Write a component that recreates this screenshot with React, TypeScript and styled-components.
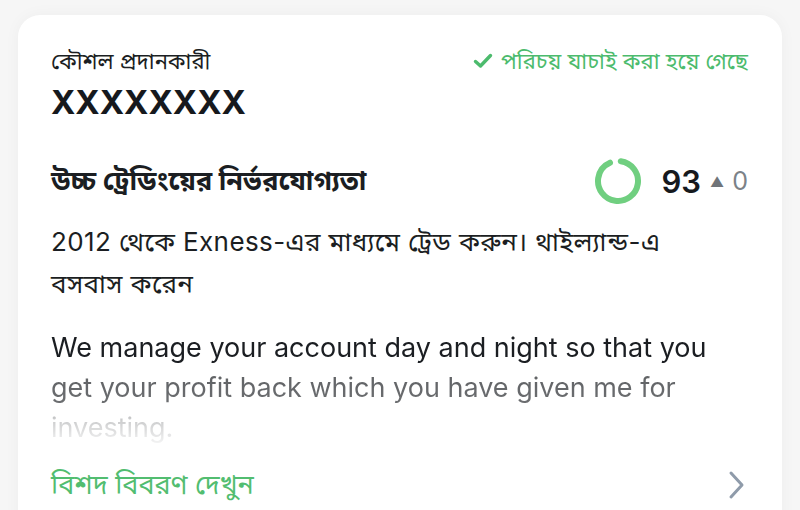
import React from 'react';
import styled, { createGlobalStyle } from 'styled-components';

const GlobalStyle = createGlobalStyle`
  html, body {
    margin: 0;
    padding: 0;
    background: #f6f6f6;
  }
  body {
    font-family: Inter, "Noto Sans", "Noto Sans Bengali", sans-serif;
    color: #1b1e22;
    -webkit-font-smoothing: antialiased;
  }
`;

const Page = styled.div`
  width: 800px;
  height: 510px;
  overflow: hidden;
  padding: 15px 18px 0 18px;
  box-sizing: border-box;
`;

const Card = styled.div`
  background: #ffffff;
  border-radius: 22px;
  box-shadow: 0 0 16px rgba(0, 0, 0, 0.04);
  padding: 30px 34px 40px 33px;
  display: flex;
  flex-direction: column;
  height: 600px;
  box-sizing: border-box;
`;

const HeaderRow = styled.div`
  display: flex;
  justify-content: space-between;
  align-items: flex-start;
`;

const Provider = styled.div`
  display: flex;
  flex-direction: column;
`;

const Label = styled.div`
  font-size: 22px;
  line-height: 32px;
  color: #1b1e22;
`;

const Name = styled.div`
  font-size: 33px;
  font-weight: 700;
  line-height: 50px;
  color: #16191d;
`;

const Verified = styled.div`
  display: flex;
  align-items: center;
  gap: 8px;
  font-size: 22px;
  line-height: 32px;
  color: #4cbb6d;
`;

const TitleRow = styled.div`
  display: flex;
  justify-content: space-between;
  align-items: center;
  margin-top: 28px;
`;

const Title = styled.div`
  font-size: 27px;
  font-weight: 700;
  line-height: 52px;
`;

const Score = styled.div`
  display: flex;
  align-items: center;
`;

const ScoreValue = styled.span`
  font-size: 31px;
  font-weight: 600;
  margin-left: 20px;
  color: #16191d;
`;

const Delta = styled.span`
  display: flex;
  align-items: center;
  gap: 8px;
  margin-left: 9px;
  font-size: 25px;
  color: #7c8288;
`;

const Triangle = styled.span`
  font-size: 14px;
  color: #707479;
`;

const Desc = styled.p`
  margin: 14px 0 0 0;
  font-size: 26px;
  letter-spacing: 0.4px;
  line-height: 42px;
  color: #1b1e22;
`;

const About = styled.p`
  margin: 23px 0 0 0;
  font-size: 27px;
  line-height: 40px;
  height: 120px;
  overflow: hidden;
  color: #1b1e22;
  -webkit-mask-image: linear-gradient(
    to bottom,
    #000 0%,
    #000 32%,
    rgba(0, 0, 0, 0.7) 36%,
    rgba(0, 0, 0, 0.64) 65%,
    rgba(0, 0, 0, 0.24) 75%,
    rgba(0, 0, 0, 0.02) 100%
  );
  mask-image: linear-gradient(
    to bottom,
    #000 0%,
    #000 32%,
    rgba(0, 0, 0, 0.7) 36%,
    rgba(0, 0, 0, 0.64) 65%,
    rgba(0, 0, 0, 0.24) 75%,
    rgba(0, 0, 0, 0.02) 100%
  );
`;

const MoreRow = styled.div`
  display: flex;
  justify-content: space-between;
  align-items: center;
  margin-top: 17px;
`;

const MoreLink = styled.a`
  font-size: 27px;
  line-height: 40px;
  color: #52bd70;
  cursor: pointer;
`;

const Ring = ({ value }: { value: number }) => {
  const r = 20;
  const c = 2 * Math.PI * r;
  const filled = c * (value / 100);
  return (
    <svg width="48" height="48" viewBox="0 0 48 48">
      <circle
        cx="24"
        cy="24"
        r={r}
        fill="none"
        stroke="#70cf80"
        strokeWidth="6"
        strokeLinecap="round"
        strokeDasharray={`${filled - 3} ${c}`}
        transform="rotate(-82 24 24)"
      />
    </svg>
  );
};

const App = () => {
  return (
    <>
      <GlobalStyle />
      <Page>
        <Card>
          <HeaderRow>
            <Provider>
              <Label>কৌশল প্রদানকারী</Label>
              <Name>XXXXXXXX</Name>
            </Provider>
            <Verified>
              <svg width="20" height="16" viewBox="0 0 20 16">
                <path
                  d="M2.5 8.5 L7.5 13 L17.5 2.5"
                  fill="none"
                  stroke="#4cbb6d"
                  strokeWidth="3.4"
                  strokeLinecap="round"
                  strokeLinejoin="round"
                />
              </svg>
              পরিচয় যাচাই করা হয়ে গেছে
            </Verified>
          </HeaderRow>

          <TitleRow>
            <Title>উচ্চ ট্রেডিংয়ের নির্ভরযোগ্যতা</Title>
            <Score>
              <Ring value={93} />
              <ScoreValue>93</ScoreValue>
              <Delta>
                <Triangle>▲</Triangle>0
              </Delta>
            </Score>
          </TitleRow>

          <Desc>
            2012 থেকে Exness-এর মাধ্যমে ট্রেড করুন। থাইল্যান্ড-এ
            <br />
            বসবাস করেন
          </Desc>

          <About>
            We manage your account day and night so that you get your profit back which you
            have given me for investing.
          </About>

          <MoreRow>
            <MoreLink>বিশদ বিবরণ দেখুন</MoreLink>
            <svg width="22" height="30" viewBox="0 0 22 30">
              <path
                d="M5 3 L16 15 L5 27"
                fill="none"
                stroke="#8f9baa"
                strokeWidth="3"
                strokeLinecap="round"
                strokeLinejoin="round"
              />
            </svg>
          </MoreRow>
        </Card>
      </Page>
    </>
  );
};

export default App;
